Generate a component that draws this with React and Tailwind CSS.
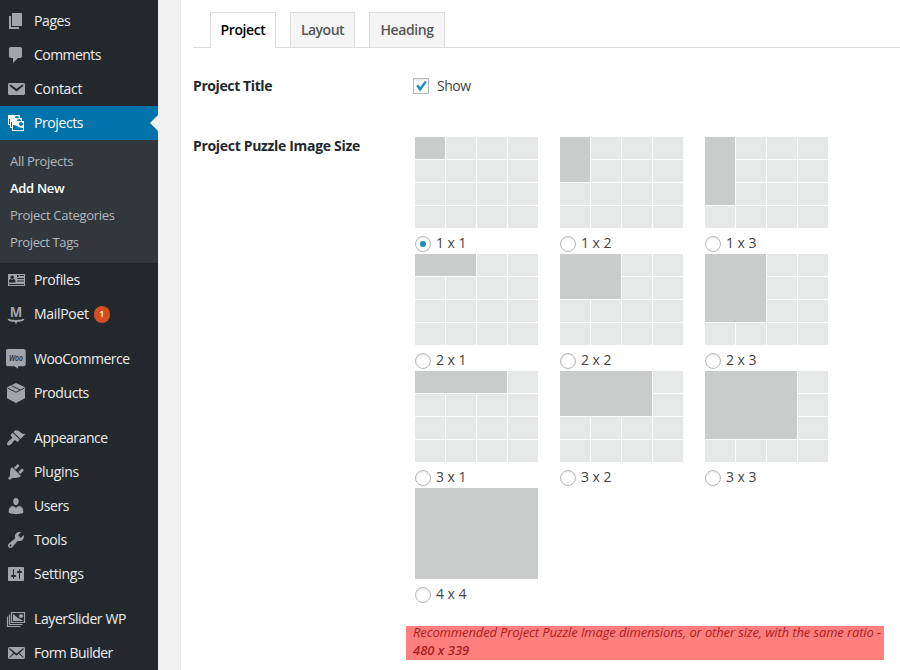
import React from "react";

const DARK = "#23282d";

const icons = {
  pages: <path d="M6 15V2h10v13H6zm-1 1h8v2H3V5h2v11z" />,
  comments: (
    <path d="M5 2h9c1.1 0 2 .9 2 2v7c0 1.1-.9 2-2 2h-2l-5 5v-5H5c-1.1 0-2-.9-2-2V4c0-1.1.9-2 2-2z" />
  ),
  contact: (
    <path d="M3.87 4h13.25C18.37 4 19 4.59 19 5.79v8.42c0 1.19-.63 1.79-1.88 1.79H3.87c-1.25 0-1.88-.6-1.88-1.79V5.79c0-1.2.63-1.79 1.88-1.79zm6.62 8.6l6.74-5.53c.24-.2.43-.66.13-1.07-.29-.41-.82-.42-1.17-.17l-5.7 3.86L4.8 5.83c-.35-.25-.88-.24-1.17.17-.3.41-.11.87.13 1.07z" />
  ),
  projects: (
    <path d="M4 15v-3H2V2h12v3h2v3h2v10H6v-3H4zm7-12c-1.1 0-2 .9-2 2h4c0-1.1-.89-2-2-2zm-7 8V6H3v5h1zm7-3h4c0-1.1-.89-2-2-2-1.1 0-2 .9-2 2zm-5 6V9H5v5h1zm9-1c1.1 0 2-.89 2-2 0-1.1-.9-2-2-2s-2 .9-2 2c0 1.11.9 2 2 2zm2 4v-2c-5 0-5-3-10-3v5h10z" />
  ),
  profiles: (
    <>
      <path d="M2 4h17v12H2z" />
      <g fill={DARK}>
        <circle cx="6.2" cy="7.2" r="1.7" />
        <path d="M3 12.500v-1.600c0-1.200.9-2 2-2l1.200 1 1.200-1c1.100 0 2 .8 2 2v1.600z" />
        <path d="M11 5h1.500v2H11zM13.500 5h4.500v1h-4.500zM11 8h7v1h-7zM11 10.500h7v1h-7zM3 14h15v1H3z" />
      </g>
    </>
  ),
  mailpoet: (
    <>
      <text
        x="10"
        y="13.3"
        textAnchor="middle"
        textLength="12.5"
        lengthAdjust="spacingAndGlyphs"
        fontSize="13.5"
        fontWeight="700"
        fontFamily="Open Sans, sans-serif"
      >
        M
      </text>
      <path d="M2.300 15c1 1.500 2.200 1.700 3.700 1.700h2.200c.9 0 1.500.3 1.800 1 .3-.7.9-1 1.800-1H14c1.500 0 2.700-.2 3.700-1.700" fill="none" stroke="currentColor" strokeWidth="2" />
      <path d="M8.300 17h3.400L10 20z" />
    </>
  ),
  woo: (
    <>
      <path d="M2 0h15.700a2 2 0 0 1 2 2v13.300a2 2 0 0 1-2 2H12v2.500l-3.500-2.500H2a2 2 0 0 1-2-2V2a2 2 0 0 1 2-2z" />
      <text
        x="9.900"
        y="11.500"
        textAnchor="middle"
        textLength="14"
        lengthAdjust="spacingAndGlyphs"
        fontSize="8"
        fontStyle="italic"
        fontWeight="600"
        fill={DARK}
        fontFamily="Open Sans, sans-serif"
      >
        Woo
      </text>
    </>
  ),
  products: (
    <>
      <path d="M10 0l9 4.300v11L10 20l-9-4.700v-11z" />
      <path d="M1.500 5l8.500 4.300L18.500 5M5.500 2.700l8.700 4.300" fill="none" stroke={DARK} strokeWidth="0.900" />
    </>
  ),
  appearance: (
    <path d="M14.48 11.06L7.41 3.99l1.5-1.5c.5-.56 2.3-.47 3.51.32 1.21.8 1.43 1.28 2.91 2.1 1.18.64 2.45 1.26 4.45.85zm-.71.71L6.7 4.7 4.93 6.47c-.39.39-.39 1.02 0 1.41l1.06 1.06c.39.39.39 1.03 0 1.42-.6.6-1.43 1.11-2.21 1.69-.35.26-.7.53-1.01.84C1.43 14.23.4 16.08 1.4 17.07c.99 1 2.84-.03 4.18-1.36.31-.31.58-.66.85-1.02.57-.78 1.08-1.61 1.69-2.21.39-.39 1.02-.39 1.41 0l1.06 1.06c.39.39 1.02.39 1.41 0z" />
  ),
  plugins: (
    <path d="M13.11 4.36L9.87 7.6 8 5.73l3.24-3.24c.35-.34 1.05-.2 1.56.32.52.51.66 1.21.31 1.55zm-8 1.77l.91-1.12 9.01 9.01-1.19.84c-.71.71-2.63 1.16-3.82 1.16H6.14L4.9 17.26c-.59.59-1.54.59-2.12 0-.59-.58-.59-1.53 0-2.12l1.24-1.24v-3.88c0-1.13.4-3.19 1.09-3.89zm7.26 3.97l3.24-3.24c.34-.35 1.04-.21 1.55.31.52.51.66 1.21.31 1.55l-3.24 3.25z" />
  ),
  users: (
    <path d="M10 9.25c-2.27 0-2.73-3.44-2.73-3.44C7 4.02 7.82 2 9.97 2c2.16 0 2.98 2.02 2.71 3.81 0 0-.41 3.44-2.68 3.44zm0 2.57L12.72 10c2.39 0 4.52 2.33 4.52 4.53v2.49s-3.65 1.13-7.24 1.13c-3.65 0-7.24-1.13-7.24-1.13v-2.49c0-2.25 1.94-4.48 4.47-4.48z" />
  ),
  tools: (
    <path d="M16.68 9.77c-1.34 1.34-3.3 1.67-4.95.99l-5.41 6.52c-.99.99-2.59.99-3.58 0s-.99-2.59 0-3.57l6.52-5.42c-.68-1.65-.35-3.61.99-4.95 1.28-1.28 3.12-1.62 4.72-1.06l-2.89 2.89 2.82 2.82 2.86-2.87c.53 1.58.18 3.39-1.08 4.65zM3.81 16.21c.4.39 1.04.39 1.43 0 .4-.4.4-1.04 0-1.43-.39-.4-1.03-.4-1.43 0-.39.39-.39 1.03 0 1.43z" />
  ),
  settings: (
    <path d="M18 16V4c0-.55-.45-1-1-1H3c-.55 0-1 .45-1 1v12c0 .55.45 1 1 1h14c.55 0 1-.45 1-1zM8 11h1c.55 0 1 .45 1 1s-.45 1-1 1H8v1.5c0 .28-.22.5-.5.5s-.5-.22-.5-.5V13H6c-.55 0-1-.45-1-1s.45-1 1-1h1V5.500c0-.28.22-.5.5-.5s.5.22.5.5V11zm5-2h-1c-.55 0-1-.45-1-1s.45-1 1-1h1V5.500c0-.28.22-.5.5-.5s.5.22.5.5V7h1c.55 0 1 .45 1 1s-.45 1-1 1h-1v5.500c0 .28-.22.5-.5.5s-.5-.22-.5-.5V9z" />
  ),
  slider: (
    <>
      <path d="M5.500 3.500h13v10h-13z M3.500 5.500v10h13 M1.500 7.500v10h13" fill="none" stroke="currentColor" strokeWidth="1.200" />
      <path d="M7 5l4.500 3.500L17.500 12H7z" />
      <circle cx="15" cy="7" r="2.100" />
    </>
  ),
  form: (
    <path d="M19 14.5v-9c0-.83-.67-1.5-1.5-1.5H3.49c-.83 0-1.5.67-1.5 1.5v9c0 .83.67 1.5 1.5 1.5H17.5c.83 0 1.5-.67 1.5-1.5zm-1.31-9.11c.33.33.15.67-.03.84L13.6 9.95l3.9 4.06c.12.14.2.36.06.51-.13.16-.43.15-.56.05l-4.37-3.73-2.14 1.95-2.13-1.95-4.37 3.73c-.13.1-.43.11-.56-.05-.14-.15-.06-.37.06-.51l3.9-4.06-4.06-3.72c-.18-.17-.36-.51-.03-.84s.67-.17.95.07l6.24 5.04 6.25-5.04c.28-.24.62-.4.95-.07z" />
  ),
};

function MenuItem({ icon, label, badge, active, tracking = "tracking-[-0.4px]" }) {
  return (
    <li
      className={
        active
          ? "relative flex h-[34px] items-center bg-[#0073aa] pl-1.5 text-white"
          : "flex h-[34px] items-center pl-1.5 text-[#eee]"
      }
    >
      <svg
        viewBox="0 0 20 20"
        className={active ? "size-5 shrink-0 overflow-visible text-white" : "size-5 shrink-0 overflow-visible text-[#a0a5aa]"}
        fill="currentColor"
      >
        {icons[icon]}
      </svg>
      <span className={"ml-2 text-[14px] leading-[18px] whitespace-nowrap " + tracking}>{label}</span>
      {badge && (
        <span className="ml-[5px] flex h-[17px] w-4 items-center justify-center rounded-full bg-[#d54e21] text-[9px] font-semibold text-white">
          {badge}
        </span>
      )}
      {active && (
        <span className="absolute top-[9px] right-0 border-y-8 border-r-8 border-y-transparent border-r-[#f1f1f1]" />
      )}
    </li>
  );
}

function Sidebar() {
  return (
    <nav className="h-full w-[158px] shrink-0 bg-[#23282d] pt-1">
      <ul>
        <MenuItem icon="pages" label="Pages" />
        <MenuItem icon="comments" label="Comments" tracking="tracking-[-0.55px]" />
        <MenuItem icon="contact" label="Contact" tracking="tracking-[-0.3px]" />
        <MenuItem icon="projects" label="Projects" active />
      </ul>
      <ul className="h-[123px] bg-[#32373c] pt-2 pl-2.5 text-[13px] leading-[27px] tracking-[-0.3px] text-[#b4b9be]">
        <li>All Projects</li>
        <li className="font-semibold text-white">Add New</li>
        <li>Project Categories</li>
        <li className="tracking-[-0.4px]">Project Tags</li>
      </ul>
      <ul>
        <MenuItem icon="profiles" label="Profiles" tracking="tracking-[-0.4px]" />
        <MenuItem icon="mailpoet" label="MailPoet" badge="1" tracking="tracking-[-0.3px]" />
      </ul>
      <ul className="mt-[11px]">
        <MenuItem icon="woo" label="WooCommerce" tracking="tracking-[-0.5px]" />
        <MenuItem icon="products" label="Products" />
      </ul>
      <ul className="mt-[11px]">
        <MenuItem icon="appearance" label="Appearance" tracking="tracking-[-0.45px]" />
        <MenuItem icon="plugins" label="Plugins" tracking="tracking-[-0.3px]" />
        <MenuItem icon="users" label="Users" />
        <MenuItem icon="tools" label="Tools" />
        <MenuItem icon="settings" label="Settings" tracking="tracking-[-0.3px]" />
      </ul>
      <ul className="mt-[11px]">
        <MenuItem icon="slider" label="LayerSlider WP" />
        <MenuItem icon="form" label="Form Builder" tracking="tracking-[-0.5px]" />
      </ul>
    </nav>
  );
}

const sizes = [
  [1, 1],
  [1, 2],
  [1, 3],
  [2, 1],
  [2, 2],
  [2, 3],
  [3, 1],
  [3, 2],
  [3, 3],
  [4, 4],
];

function SizeOption({ cols, rows, checked }) {
  const cells = Array.from({ length: 16 - cols * rows });
  return (
    <div className="h-[117px] w-[123px]">
      <div className="grid h-[91px] grid-cols-[repeat(4,30px)] grid-rows-[repeat(4,22px)] gap-px">
        <div
          className="bg-[#cacccb]"
          style={{ gridColumn: `1 / span ${cols}`, gridRow: `1 / span ${rows}` }}
        />
        {cells.map((_, i) => (
          <div key={i} className="bg-[#e6e8e7]" />
        ))}
      </div>
      <label className="flex h-[26px] items-center pt-[5px]">
        <span className="mt-px flex size-4 items-center justify-center rounded-full border border-[#b4b9be] bg-white shadow-[inset_0_1px_2px_rgba(0,0,0,0.1)]">
          {checked && <span className="size-1.5 rounded-full bg-[#1e8cbe]" />}
        </span>
        <span className="ml-[5px] pb-0.5 text-[14px] leading-[18px] tracking-[-0.05px] text-[#444]">
          {cols} x {rows}
        </span>
      </label>
    </div>
  );
}

export default function App() {
  return (
    <div className="flex h-[670px] w-[900px] overflow-hidden bg-[#f1f1f1] font-['Open_Sans','Noto_Sans',sans-serif]">
      <Sidebar />
      <main className="ml-[22px] flex-1 border-l border-[#e5e5e5] bg-white pl-3">
        <div className="flex h-12 items-end gap-3.5 border-b border-[#ddd] pl-[17px] text-[14px] leading-[18px] font-semibold text-[#555]">
          <div className="-mb-px flex h-9 w-[66px] items-center justify-center border border-b-0 border-[#ddd] bg-white pb-px tracking-[-0.4px] text-black">
            Project
          </div>
          <div className="flex h-[35px] w-[65px] items-center justify-center border border-b-0 border-[#ddd] bg-[#f5f5f5] tracking-[-0.5px]">
            Layout
          </div>
          <div className="flex h-[35px] w-[76px] items-center justify-center border border-b-0 border-[#ddd] bg-[#f5f5f5] tracking-[-0.4px]">
            Heading
          </div>
        </div>

        <div className="mt-7 flex h-5 items-center text-[14px] leading-[18px]">
          <div className="w-[220px] font-bold tracking-[-0.4px] text-[#23282d]">Project Title</div>
          <label className="flex items-center">
            <span className="flex size-4 items-center justify-center border border-[#b4b9be] bg-white shadow-[inset_0_1px_2px_rgba(0,0,0,0.1)]">
              <svg viewBox="0 0 14 14" className="size-3.5" fill="#1e8cbe">
                <path d="M2.300 6.900l1.900-1.400 2 2.500 4.500-6.100 2 1.200L6.800 11.700H5.400z" />
              </svg>
            </span>
            <span className="ml-2 tracking-[-0.5px] text-[#444]">Show</span>
          </label>
        </div>

        <div className="mt-[41px] flex">
          <div className="-mt-px w-[222px] shrink-0 text-[14px] leading-5 font-bold tracking-[-0.32px] text-[#23282d]">
            Project Puzzle Image Size
          </div>
          <div className="grid grid-cols-3 gap-x-[22px]">
            {sizes.map(([c, r]) => (
              <SizeOption key={`${c}x${r}`} cols={c} rows={r} checked={c === 1 && r === 1} />
            ))}
          </div>
        </div>

        <p className="mt-[21px] ml-[213px] flex h-[34px] w-[478px] flex-col bg-[#ff7f7f] pl-[7px] text-[13px] leading-[18px] whitespace-nowrap text-[#a81e1e] italic">
          <span className="-mt-[3px] tracking-[-0.125px]">
            Recommended Project Puzzle Image dimensions, or other size, with the same ratio -
          </span>
          <strong className="font-semibold">480 x 339</strong>
        </p>
      </main>
    </div>
  );
}
